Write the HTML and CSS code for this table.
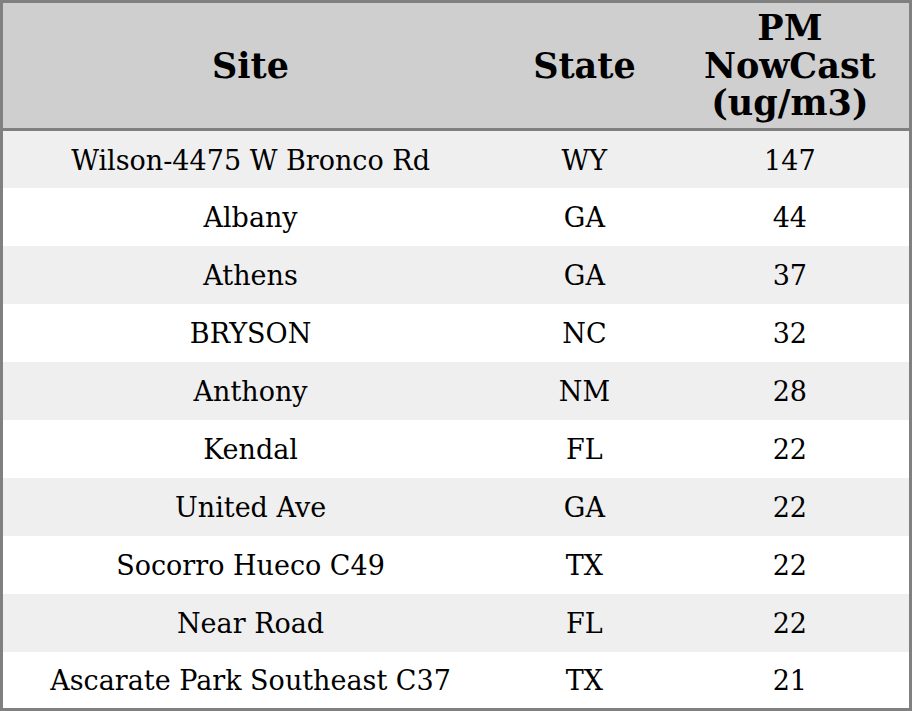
FILE: index.html
```html
<!DOCTYPE html>
<html>
<head>
<meta charset="utf-8">
<link rel="stylesheet" href="styles.css">
</head>
<body>
<table class="aq">
  <colgroup>
    <col class="c-site">
    <col class="c-state">
    <col class="c-pm">
  </colgroup>
  <thead>
    <tr><th>Site</th><th>State</th><th>PM<br>NowCast<br>(ug/m3)</th></tr>
  </thead>
  <tbody>
    <tr><td>Wilson-4475 W Bronco Rd</td><td>WY</td><td>147</td></tr>
    <tr><td>Albany</td><td>GA</td><td>44</td></tr>
    <tr><td>Athens</td><td>GA</td><td>37</td></tr>
    <tr><td>BRYSON</td><td>NC</td><td>32</td></tr>
    <tr><td>Anthony</td><td>NM</td><td>28</td></tr>
    <tr><td>Kendal</td><td>FL</td><td>22</td></tr>
    <tr><td>United Ave</td><td>GA</td><td>22</td></tr>
    <tr><td>Socorro Hueco C49</td><td>TX</td><td>22</td></tr>
    <tr><td>Near Road</td><td>FL</td><td>22</td></tr>
    <tr><td>Ascarate Park Southeast C37</td><td>TX</td><td>21</td></tr>
  </tbody>
</table>
</body>
</html>
```
FILE: styles.css
```css
html, body {
  margin: 0;
  padding: 0;
  background: #ffffff;
}
.aq {
  width: 912px;
  height: 711px;
  border-collapse: collapse;
  border: 3px solid #808080;
  font-family: "DejaVu Serif", serif;
  color: #000;
  table-layout: fixed;
}
.c-site { width: 495px; }
.c-state { width: 172px; }
.c-pm { width: 239px; }
.aq th {
  background: #cfcfcf;
  font-size: 35px;
  font-weight: bold;
  line-height: 37.5px;
  height: 125px;
  padding: 0;
  text-align: center;
  vertical-align: middle;
  border-bottom: 3px solid #808080;
}
.aq td {
  font-size: 27px;
  line-height: 30px;
  padding: 3px 0 0;
  box-sizing: border-box;
  height: 57.7px;
  text-align: center;
  vertical-align: middle;
}
.aq tbody tr:nth-child(odd) td {
  background: #efefef;
}
```
